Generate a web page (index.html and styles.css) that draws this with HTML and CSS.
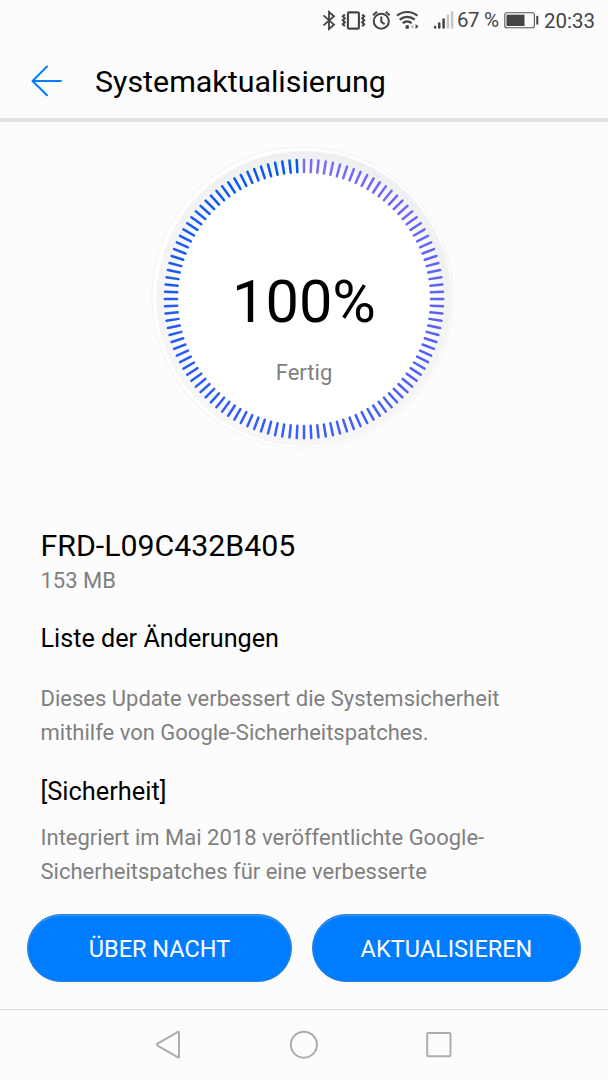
FILE: index.html
```html
<!doctype html>
<html lang="de">
  <head>
    <meta charset="UTF-8" />
    <meta name="viewport" content="width=device-width, initial-scale=1.0" />
    <title>Systemaktualisierung</title>
    <link rel="stylesheet" href="styles.css">
  </head>
  <body>
    <div class="status-bar">
      <svg class="status-icons" width="134" height="40" viewBox="320 0 134 40" fill="none" stroke="#444" stroke-width="1.8">
        <!-- bluetooth -->
        <path d="M323.500 15.300L334 24.700L329 29V12L334 16.200L323.500 25.400" stroke-width="1.800" />
        <!-- vibrate -->
        <rect x="347.900" y="12.400" width="11" height="16.200" rx="1.200" stroke-width="2.100" />
        <path d="M344.800 14.500l-2 1.800 2 2-2 2 2 2-2 2 2 2M362.200 14.500l2 1.800-2 2 2 2-2 2 2 2-2 2" stroke-width="2" />
        <!-- alarm -->
        <circle cx="381.300" cy="21.200" r="7.500" stroke-width="2" />
        <path d="M381.300 16.500v5.200l3.300 2.600M373 15.200l4-3.400M389.700 15.200l-4-3.400" stroke-width="2" />
        <!-- wifi -->
        <path d="M397 15.600c6-4.800 14.400-4.800 20.400 0M399.700 19.700c4.500-3.800 10.500-3.800 15 0M402.700 23.200c2.800-2.300 6.200-2.300 9 0" stroke-width="2.200" />
        <circle cx="407.200" cy="27" r="1.900" fill="#444" stroke="none" />
        <path d="M410.500 26.500l3-2.500v5z" fill="#bbb" stroke="none" />
        <path d="M418.500 26.500l-3-2.500v5z" fill="#444" stroke="none" />
        <!-- signal -->
        <g stroke-width="2.500" stroke-linecap="round">
          <path d="M435.100 26.900v.7M439.300 23.500v4.100M443.600 19.500v8.100" />
          <path d="M447.900 15.600v12M452.100 12.200v15.400" stroke="#c6c6c6" />
        </g>
      </svg>
      <span class="status-percent">67 %</span>
      <svg class="battery" width="36" height="18" viewBox="0 0 36 18">
        <rect x=".8" y="1.800" width="29.600" height="15" rx="2" fill="none" stroke="#555" stroke-width="1.100" />
        <rect x="2.500" y="3.700" width="18" height="11.300" fill="#444" />
        <rect x="32.300" y="4.700" width="2" height="9" rx=".8" fill="#444" />
      </svg>
      <span class="status-time">20:33</span>
    </div>

    <header class="header">
      <svg class="back" width="32" height="32" viewBox="0 0 32 32" fill="none" stroke="#007dff" stroke-width="2" stroke-linecap="round" stroke-linejoin="round">
        <path d="M16 1.500L1.500 16L16 30.200M1.500 16H30" />
      </svg>
      <h1 class="title">Systemaktualisierung</h1>
    </header>

    <main class="content">
      <div class="progress">
        <svg class="dial" width="308" height="308" viewBox="-154 -153 308 308">
          <defs>
            <linearGradient id="shade" x1=".7" y1="0" x2=".4" y2="1">
              <stop offset="0" stop-color="#eeeff1" />
              <stop offset=".5" stop-color="#f4f4f5" />
              <stop offset="1" stop-color="#f7f7f7" />
            </linearGradient>
            <radialGradient id="face">
              <stop offset=".9" stop-color="#fff" />
              <stop offset="1" stop-color="#fff" stop-opacity="0" />
            </radialGradient>
          </defs>
          <circle cx="-1.500" cy="-1.500" r="150.700" fill="#fefefe" stroke="#f4f4f4" stroke-width="1.200" />
          <circle cy="-.5" r="147.500" fill="url(#shade)" />
          <circle r="142" fill="url(#face)" />
          <g id="ticks" stroke-width="2.500" stroke-linecap="round"></g>
        </svg>
        <div class="progress-text">
          <div class="percent">100%</div>
          <div class="state">Fertig</div>
        </div>
      </div>

      <div class="changelog">
        <h2 class="version">FRD-L09C432B405</h2>
        <div class="size">153 MB</div>
        <h3 class="list-title">Liste der Änderungen</h3>
        <p class="text">Dieses Update verbessert die Systemsicherheit<br />mithilfe von Google-Sicherheitspatches.</p>
        <h3 class="section-title">[Sicherheit]</h3>
        <p class="text">Integriert im Mai 2018 veröffentlichte Google-<br />Sicherheitspatches für eine verbesserte</p>
      </div>
    </main>

    <div class="actions">
      <button type="button" class="button button-night">ÜBER NACHT</button>
      <button type="button" class="button button-update">AKTUALISIEREN</button>
    </div>

    <nav class="nav-bar">
      <svg width="30" height="30" viewBox="0 0 30 30">
        <path d="M25 2.500V27Q25 27.800 24 27.300L3.600 15.600Q2.400 14.600 3.600 13.600L24 2Q25 1.500 25 2.500Z" />
      </svg>
      <svg width="30" height="30" viewBox="0 0 30 30">
        <circle cx="14.900" cy="14.700" r="13" />
      </svg>
      <svg width="30" height="30" viewBox="0 0 30 30">
        <rect x="3.200" y="3" width="23.300" height="23.300" rx="1" />
      </svg>
    </nav>

    <script>
      // one tick every 3 degrees, clockwise from the top
      const colors = [
        [124, 108, 245],
        [92, 98, 248],
        [58, 94, 250],
        [32, 92, 245],
        [4, 88, 242],
      ];
      const ticks = document.querySelector("#ticks");
      for (let i = 0; i < 120; i++) {
        const pos = i / 30;
        const from = colors[Math.floor(pos)];
        const to = colors[Math.floor(pos) + 1];
        const rgb = from.map((c, k) => Math.round(c + (to[k] - c) * (pos % 1)));
        const line = document.createElementNS("http://www.w3.org/2000/svg", "line");
        line.setAttribute("y1", -139.2);
        line.setAttribute("y2", -127);
        line.setAttribute("stroke", `rgb(${rgb})`);
        line.setAttribute("transform", `rotate(${i * 3})`);
        ticks.appendChild(line);
      }
    </script>
  </body>
</html>
```
FILE: styles.css
```css
* {
  box-sizing: border-box;
}
body {
  margin: 0;
  height: 1080px;
  display: flex;
  flex-direction: column;
  overflow: hidden;
  background: #fcfcfc;
  color: #000;
  font-family: Roboto, "Liberation Sans", sans-serif;
}
svg {
  display: block;
  flex: none;
}
h1,
h2,
h3,
p {
  margin: 0;
  font-weight: 400;
}
.status-bar {
  display: flex;
  align-items: center;
  height: 40px;
  padding-left: 320px;
  color: #444;
  font-size: 20.5px;
  white-space: nowrap;
}
.status-percent {
  width: 50px;
  padding-left: 3px;
  letter-spacing: -0.4px;
}
.status-time {
  padding: 1px 0 0 4px;
}
.header {
  display: flex;
  align-items: center;
  gap: 32px;
  height: 82px;
  padding: 0 0 0 31px;
  border-bottom: 4px solid #e3e3e3;
}
.back {
  margin-top: 4px;
}
.title {
  padding-top: 6px;
  font-size: 30.4px;
  line-height: 40px;
}
.content {
  height: 759px;
  overflow: hidden;
}
.progress {
  display: grid;
  justify-content: center;
  padding-top: 24px;
}
.dial,
.progress-text {
  grid-area: 1 / 1;
}
.progress-text {
  padding-top: 121px;
  text-align: center;
}
.percent {
  font-size: 59.5px;
  line-height: 70px;
}
.state {
  margin-top: 21px;
  color: #808080;
  font-size: 22px;
  line-height: 30px;
}
.changelog {
  padding: 71px 40.5px 0;
}
.version {
  font-size: 30.3px;
  line-height: 41px;
}
.size {
  color: #808080;
  font-size: 22px;
  line-height: 30px;
}
.list-title {
  margin-top: 26px;
  font-size: 25.2px;
  line-height: 34px;
}
.text {
  margin-top: 26px;
  color: #808080;
  font-size: 22px;
  line-height: 34px;
}
.section-title {
  margin-top: 24px;
  font-size: 25.4px;
  line-height: 34px;
}
.section-title + .text {
  margin-top: 13px;
}
.actions {
  display: flex;
  gap: 20px;
  height: 128px;
  padding: 33px 27px 0;
}
.button {
  height: 68px;
  padding: 2px 0 0;
  border: 1px solid #2f7fd0;
  border-radius: 34px;
  background: #007dff;
  box-shadow: inset 0 1px 1px #3d9bff;
  color: #fff;
  font-family: inherit;
  font-size: 23.5px;
}
.button-night {
  width: 265px;
}
.button-update {
  width: 269px;
}
.nav-bar {
  display: flex;
  justify-content: center;
  gap: 105px;
  height: 71px;
  padding-top: 20px;
  border-top: 1px solid #dedede;
  fill: none;
  stroke: #adadad;
  stroke-width: 2;
}
```
